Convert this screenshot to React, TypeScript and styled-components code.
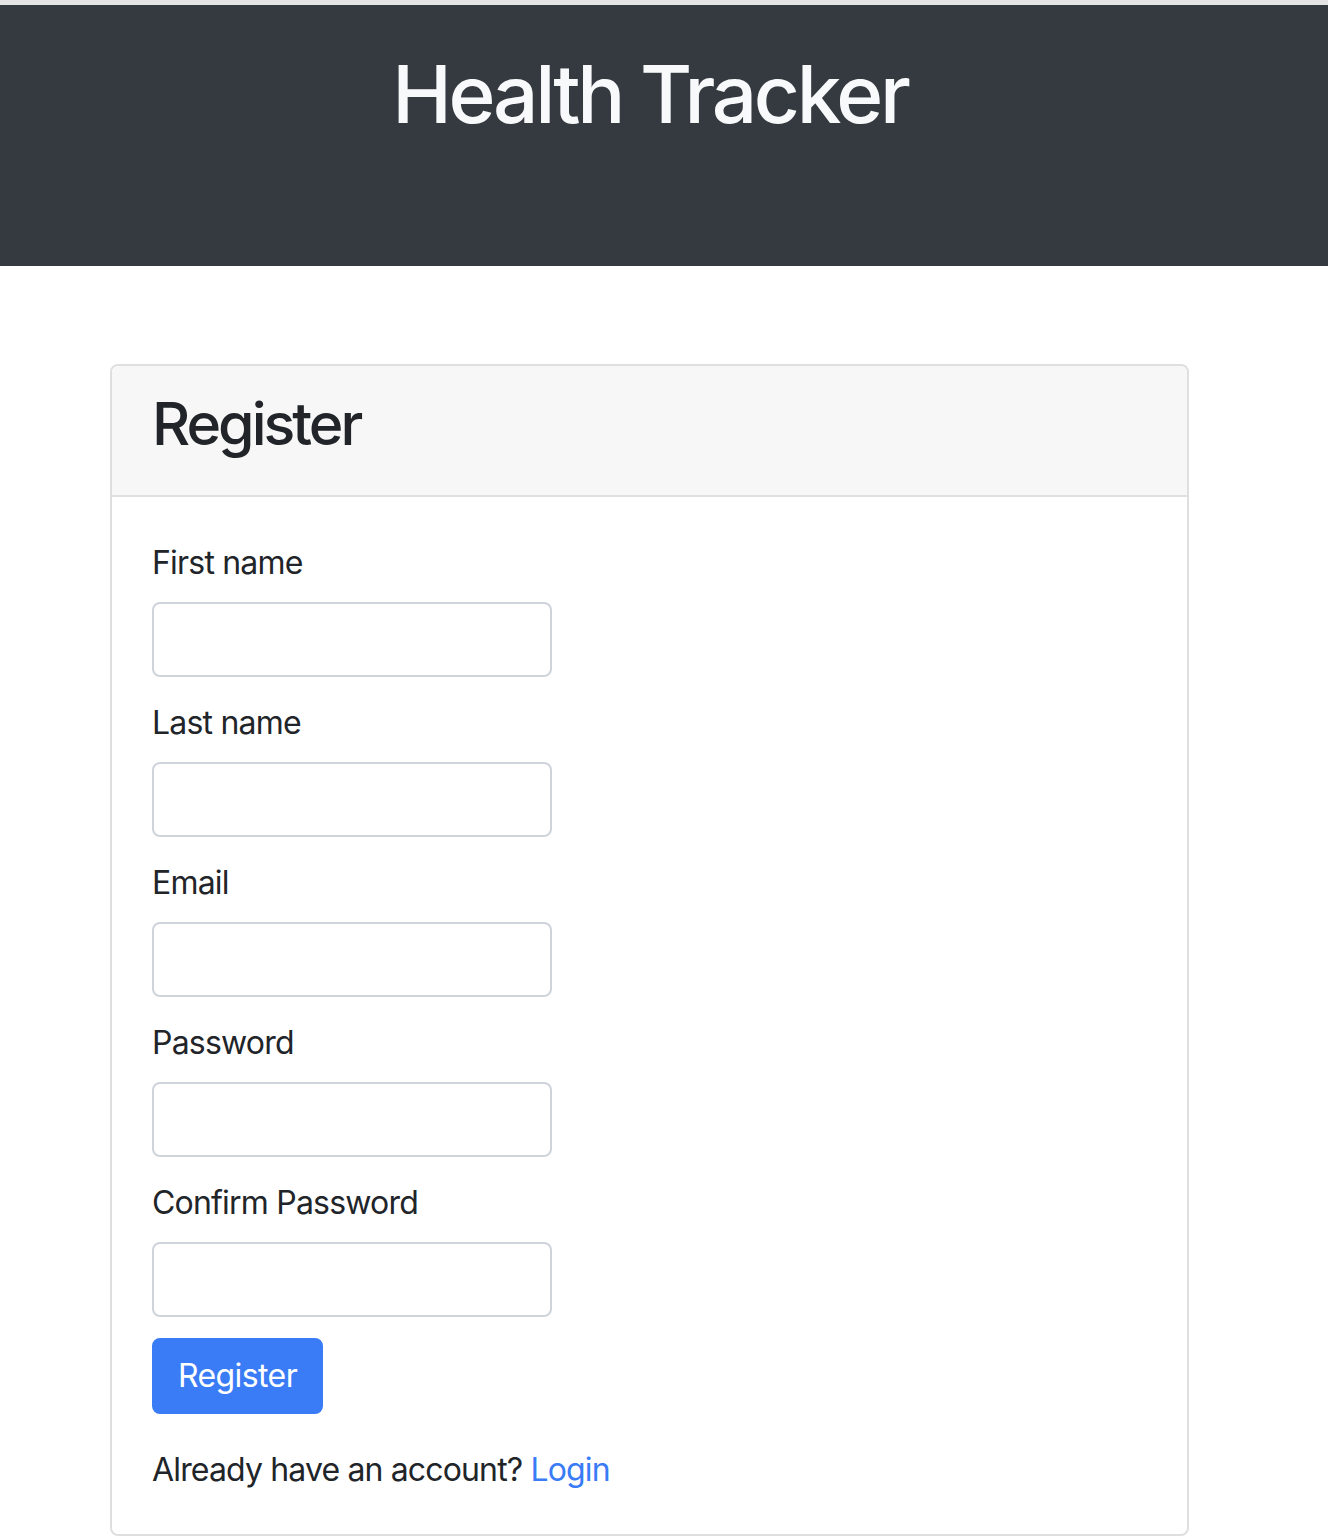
import React from "react";
import styled, { createGlobalStyle } from "styled-components";

const GlobalStyle = createGlobalStyle`
  html, body {
    margin: 0;
    padding: 0;
    background: #ffffff;
  }
  body {
    font-family: Inter, "Noto Sans", "Liberation Sans", sans-serif;
    color: #212529;
  }
  * { box-sizing: border-box; }
`;

const Page = styled.div`
  width: 1328px;
  border-top: 5px solid #e4e4e4;
`;

const Header = styled.header`
  background: #343a40;
  height: 261px;
  padding-top: 41px;
`;

const HeaderInner = styled.div`
  width: 1300px;
  text-align: center;
`;

const Title = styled.h1`
  margin: 0;
  font-size: 80px;
  line-height: 96px;
  font-weight: 500;
  color: #f8f9fa;
  letter-spacing: -3.3px;
`;

const Main = styled.main`
  padding: 98px 0 0 110px;
`;

const Card = styled.section`
  width: 1079px;
  border: 2px solid #dfdfdf;
  border-radius: 8px;
  overflow: hidden;
`;

const CardHeader = styled.div`
  background: #f7f7f7;
  border-bottom: 2px solid #dfdfdf;
  padding: 22px 40px 36px;
`;

const CardTitle = styled.h2`
  margin: 0;
  font-size: 59px;
  line-height: 71px;
  font-weight: 500;
  color: #212529;
  letter-spacing: -3px;
`;

const CardBody = styled.form`
  padding: 40px;
`;

const Group = styled.div`
  display: flex;
  flex-direction: column;
  align-items: flex-start;
  margin-bottom: 20px;
`;

const Label = styled.label`
  font-size: 32px;
  line-height: 48px;
  padding-top: 2px;
  margin-bottom: 15px;
  color: #212529;
  letter-spacing: -0.8px;
`;

const Input = styled.input`
  width: 400px;
  height: 75px;
  border: 2px solid #ced4da;
  border-radius: 8px;
  background: #ffffff;
  padding: 12px 24px;
  font-size: 32px;
  font-family: inherit;
  outline: none;
`;

const Button = styled.button`
  margin-top: 1px;
  height: 76px;
  padding: 0 24px;
  border: 2px solid #3a7bf6;
  border-radius: 8px;
  background: #3a7bf6;
  color: #ffffff;
  font-size: 32px;
  line-height: 48px;
  font-family: inherit;
  letter-spacing: -0.6px;
  cursor: pointer;
`;

const Footer = styled.p`
  margin: 32px 0 0;
  font-size: 32px;
  line-height: 48px;
  color: #212529;
  letter-spacing: -0.85px;
`;

const Link = styled.a`
  color: #3a7bf6;
  text-decoration: none;
`;

const fields = [
  { id: "first", label: "First name", type: "text" },
  { id: "last", label: "Last name", type: "text" },
  { id: "email", label: "Email", type: "email" },
  { id: "password", label: "Password", type: "password" },
  { id: "confirm", label: "Confirm Password", type: "password" },
];

export default function App() {
  return (
    <>
      <GlobalStyle />
      <Page>
        <Header>
          <HeaderInner>
            <Title>Health Tracker</Title>
          </HeaderInner>
        </Header>
        <Main>
          <Card>
            <CardHeader>
              <CardTitle>Register</CardTitle>
            </CardHeader>
            <CardBody onSubmit={(e) => e.preventDefault()}>
              {fields.map((f) => (
                <Group key={f.id}>
                  <Label htmlFor={f.id}>{f.label}</Label>
                  <Input id={f.id} type={f.type} />
                </Group>
              ))}
              <Button type="submit">Register</Button>
              <Footer>
                Already have an account? <Link href="#">Login</Link>
              </Footer>
            </CardBody>
          </Card>
        </Main>
      </Page>
    </>
  );
}
